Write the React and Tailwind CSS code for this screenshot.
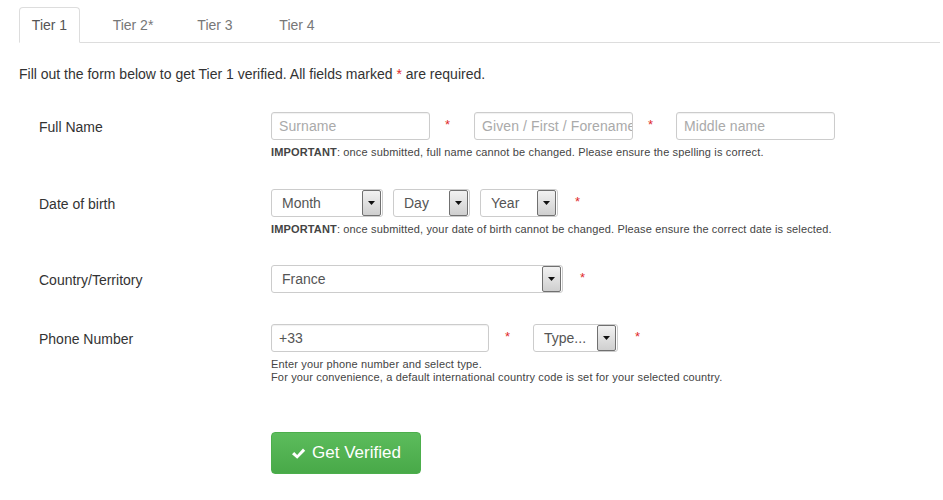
import React from 'react';

// ── Bits ──────────────────────────────────────────────────────────────────────

const Star = ({ className = '' }) => (
    <span className={`text-[#e02a2a] text-[13px] leading-none ${className}`}>*</span>
);

function TextBox({ placeholder, value, width }) {
    return (
        <div className={`h-[28px] ${width} border border-[#ccc] rounded-[3px] bg-white flex items-center px-[7px] overflow-hidden whitespace-nowrap shadow-[inset_0_1px_1px_rgba(0,0,0,0.06)]`}>
            {value
                ? <span className="text-[14px] text-[#555]">{value}</span>
                : <span className="text-[14px] tracking-[0.1px] text-[#aaa]">{placeholder}</span>}
        </div>
    );
}

function SelectBox({ value, width }) {
    return (
        <div className={`h-[28px] ${width} border border-[#ccc] rounded-[3px] bg-white flex items-center overflow-hidden`}>
            <span className="flex-1 px-[10px] text-[14px] text-[#555] whitespace-nowrap">{value}</span>
            <div className="h-[26px] w-[19px] mr-[1px] border border-[#707070] bg-gradient-to-b from-[#f2f2f2] to-[#cfcfcf] flex items-center justify-center rounded-[2px]">
                <svg width="7" height="4" viewBox="0 0 7 4"><path d="M0 0h7L3.5 4z" fill="#111" /></svg>
            </div>
        </div>
    );
}

function Help({ children }) {
    return <p className="text-[11px] leading-[13px] tracking-[0.15px] text-[#444] mt-[6px] whitespace-nowrap">{children}</p>;
}

function Row({ label, children, className = '' }) {
    return (
        <div className={`flex ${className}`}>
            <div className="w-[271px] shrink-0 pl-[39px] pt-[5px] text-[14px] text-[#333]">{label}</div>
            <div>{children}</div>
        </div>
    );
}

// ── Page ──────────────────────────────────────────────────────────────────────

export default function App() {
    const tabs = ['Tier 1', 'Tier 2*', 'Tier 3', 'Tier 4'];
    return (
        <div className="w-[943px] h-[500px] bg-white overflow-hidden" style={{ fontFamily: '"Liberation Sans", Arial, sans-serif' }}>
            {/* Tabs */}
            <div className="pt-[7px] pl-[19px] pr-[3px]">
                <div className="flex border-b border-[#ddd] h-[36px]">
                    {tabs.map((t, i) => (
                        <div
                            key={t}
                            className={i === 0
                                ? 'h-[36px] w-[61px] -mb-px border border-[#ddd] border-b-white rounded-t-[4px] bg-white text-[#555] text-[14px] flex items-center justify-center'
                                : `h-[36px] w-[82px] text-[#777] text-[14px] flex items-center justify-center ${i === 1 ? 'ml-[12px]' : ''}`}
                        >
                            {t}
                        </div>
                    ))}
                </div>
            </div>

            <p className="pl-[19px] mt-[21px] text-[14px] text-[#333]">
                Fill out the form below to get Tier 1 verified. All fields marked <span className="text-[#e02a2a]">*</span> are required.
            </p>

            {/* Full name */}
            <Row label="Full Name" className="mt-[27px]">
                <div className="flex items-start">
                    <TextBox placeholder="Surname" width="w-[159px]" />
                    <Star className="w-[44px] pl-[15px] pt-[6px]" />
                    <TextBox placeholder="Given / First / Forename" width="w-[159px]" />
                    <Star className="w-[43px] pl-[15px] pt-[6px]" />
                    <TextBox placeholder="Middle name" width="w-[159px]" />
                </div>
                <Help><b>IMPORTANT</b>: once submitted, full name cannot be changed. Please ensure the spelling is correct.</Help>
            </Row>

            {/* Date of birth */}
            <Row label="Date of birth" className="mt-[30px]">
                <div className="flex items-start gap-[10px]">
                    <SelectBox value="Month" width="w-[112px]" />
                    <SelectBox value="Day" width="w-[77px]" />
                    <SelectBox value="Year" width="w-[78px]" />
                    <Star className="pl-[7px] pt-[6px]" />
                </div>
                <Help><b>IMPORTANT</b>: once submitted, your date of birth cannot be changed. Please ensure the correct date is selected.</Help>
            </Row>

            {/* Country */}
            <Row label="Country/Territory" className="mt-[29px]">
                <div className="flex items-start">
                    <SelectBox value="France" width="w-[292px]" />
                    <Star className="pl-[17px] pt-[6px]" />
                </div>
            </Row>

            {/* Phone */}
            <Row label="Phone Number" className="mt-[31px]">
                <div className="flex items-start">
                    <TextBox value="+33" width="w-[218px]" />
                    <Star className="w-[44px] pl-[16px] pt-[6px]" />
                    <SelectBox value="Type..." width="w-[85px]" />
                    <Star className="pl-[17px] pt-[6px]" />
                </div>
                <Help>
                    Enter your phone number and select type.<br />
                    For your convenience, a default international country code is set for your selected country.
                </Help>
            </Row>

            {/* Submit */}
            <div className="pl-[271px] mt-[48px]">
                <button className="h-[42px] w-[150px] rounded-[4px] border border-[#4cae4c] bg-gradient-to-b from-[#5cbc5c] to-[#48a948] text-white text-[17px] flex items-center justify-center gap-[6px]">
                    <svg width="15" height="13" viewBox="0 0 15 13"><path d="M1 7.2l2.2-2.2 3 3L12 1.5l2.2 2.2L6.2 11.8z" fill="#fff" /></svg>
                    Get Verified
                </button>
            </div>
        </div>
    );
}
